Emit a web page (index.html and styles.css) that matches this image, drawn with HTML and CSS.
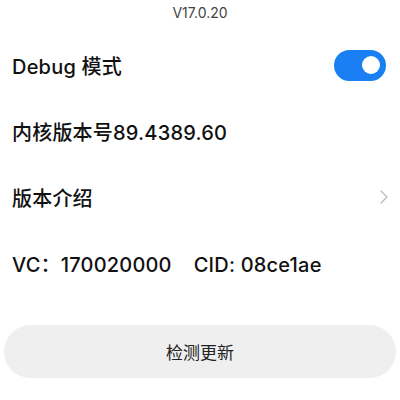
FILE: index.html
```html
<!DOCTYPE html>
<html lang="zh-CN">

<head>
    <meta charset="UTF-8">
    <meta name="viewport" content="width=device-width, initial-scale=1.0">
    <title>关于</title>

    <link rel="stylesheet" href="styles.css">
</head>

<body>
    <div id="base">
        <div class="version">V17.0.20</div>

        <div class="list">
            <div class="row">
                <span class="label">Debug 模式</span>
                <span class="toggle on"><span class="knob"></span></span>
            </div>

            <div class="row">
                <span class="label">内核版本号89.4389.60</span>
            </div>

            <div class="row">
                <span class="label">版本介绍</span>
                <svg class="chevron" width="10" height="16" viewBox="0 0 10 16">
                    <path d="M2 2 L8 8 L2 14" fill="none" stroke="#bdbdbd" stroke-width="1.4" stroke-linecap="round" stroke-linejoin="round"/>
                </svg>
            </div>

            <div class="row">
                <span class="label">VC：170020000<span class="cid">CID: 08ce1ae</span></span>
            </div>
        </div>

        <button class="check">检测更新</button>
    </div>
</body>

</html>
```

FILE: styles.css
```css
* {
    font-family: Inter, "Noto Sans CJK SC", sans-serif;
    box-sizing: border-box;
}

body {
    margin: 0;
    background-color: #fff;
}

#base {
    width: 400px;
    height: 400px;
    display: flex;
    flex-direction: column;
}

.version {
    height: 26px;
    line-height: 26px;
    text-align: center;
    font-size: 14px;
    color: #444;
}

.list {
    margin-top: 6px;
    display: flex;
    flex-direction: column;
}

.row {
    height: 66px;
    padding: 0 14px 0 12px;
    display: flex;
    align-items: center;
    justify-content: space-between;
}

.label {
    font-size: 20px;
    font-weight: 500;
    color: #111;
    letter-spacing: 0.2px;
}

.cid {
    margin-left: 22px;
}

.toggle {
    width: 52px;
    height: 31px;
    border-radius: 16px;
    background-color: #ccc;
    display: flex;
    align-items: center;
    padding: 0 6px;
}

.toggle.on {
    background-color: #1a7ff2;
    justify-content: flex-end;
}

.knob {
    width: 18px;
    height: 18px;
    border-radius: 50%;
    background-color: #fff;
}

.chevron {
    margin-right: -3px;
}

.check {
    margin: 29px 4px 0;
    height: 53px;
    border: none;
    border-radius: 27px;
    background-color: #efefef;
    font-size: 17px;
    color: #222;
}
```
